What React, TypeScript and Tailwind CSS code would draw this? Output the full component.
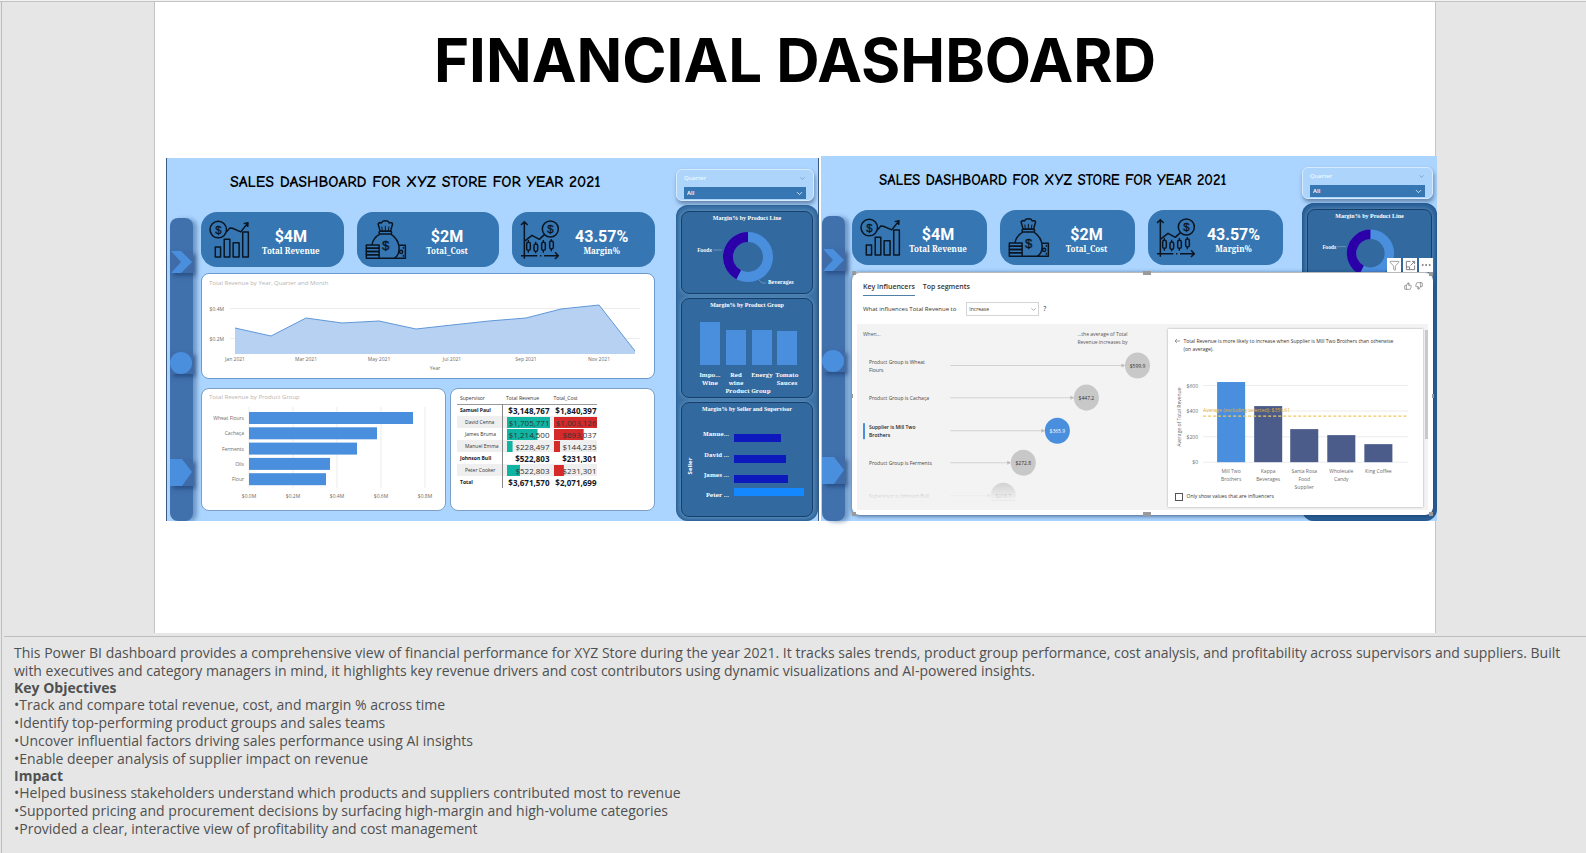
import React from "react";
import { ChevronDown, Filter, ThumbsUp, ThumbsDown, Ellipsis } from "lucide-react";

const SANS = "font-['Open_Sans','Noto_Sans',sans-serif]";
const SERIF = "font-['Noto_Serif','DejaVu_Serif','Liberation_Serif',serif]";
const NARROW_SERIF = "font-['Liberation_Serif',serif]";

type TProps = {
  x: number;
  y: number;
  children: React.ReactNode;
  anchor?: "start" | "middle" | "end";
  className?: string;
  transform?: string;
};

function T({ x, y, children, anchor = "start", className = "fill-[#6b6b6b]", transform }: TProps) {
  return (
    <text x={x} y={y} textAnchor={anchor} transform={transform} className={className}>
      {children}
    </text>
  );
}

function RevenueIcon() {
  return (
    <svg viewBox="0 0 122 118" className="h-[39px] w-[41px]" fill="none" stroke="#0a1522" strokeWidth="4.5" strokeLinejoin="round">
      <circle cx="27" cy="29" r="25" />
      <text x="27" y="41" textAnchor="middle" fontSize="34" fill="#0a1522" strokeWidth="1" className="font-['Liberation_Sans',sans-serif]">$</text>
      <path d="M52 36 L62 24 L70 25 L95 36 L116 10 M104 11 L117 8 L116 21" />
      <rect x="18" y="82" width="16" height="30" />
      <rect x="45" y="58" width="17" height="54" />
      <rect x="72" y="69" width="18" height="43" />
      <rect x="101" y="36" width="17" height="76" />
    </svg>
  );
}

function MoneyBagIcon() {
  return (
    <svg viewBox="0 0 126 122" className="h-[40px] w-[42px]" fill="none" stroke="#0a1522" strokeWidth="4.5" strokeLinejoin="round">
      <path d="M45 34 L39 12 Q42 6 49 9 Q53 1 61 3 Q70 1 73 9 Q81 6 83 12 L77 34 Z" />
      <path d="M52 33 L50 20 M61 33 V18 M70 33 L72 20" strokeWidth="3" />
      <rect x="42" y="34" width="38" height="9" rx="3" />
      <path d="M44 43 Q24 54 20 76 M78 43 Q101 58 103 84 Q104 108 88 117 H42" />
      <text x="62" y="92" textAnchor="middle" fontSize="40" fill="#0a1522" strokeWidth="1" className="font-['Liberation_Sans',sans-serif]">$</text>
      <rect x="3" y="76" width="39" height="10" />
      <rect x="3" y="86" width="39" height="10" />
      <rect x="3" y="96" width="39" height="10" />
      <rect x="3" y="106" width="39" height="11" />
      <path d="M103 77 H122 V117 H88" />
      <circle cx="109" cy="97" r="5" />
      <path d="M116 82 V88 M116 106 V112" strokeWidth="4" />
    </svg>
  );
}

function MarginIcon() {
  return (
    <svg viewBox="0 0 120 120" className="h-[40px] w-[40px]" fill="none" stroke="#0a1522" strokeWidth="4.5" strokeLinejoin="round">
      <path d="M13 116 V6 M3 15 L13 5 L23 15" />
      <path d="M3 107 H52 M60 107 H64 M72 107 H114 M105 97 L115 107 L105 117" />
      <path d="M13 64 L36 46 L58 58 L74 43" />
      <circle cx="91" cy="27" r="24" />
      <text x="91" y="39" textAnchor="middle" fontSize="34" fill="#0a1522" strokeWidth="1" className="font-['Liberation_Sans',sans-serif]">$</text>
      <rect x="20" y="67" width="11" height="24" rx="5" />
      <rect x="42" y="72" width="11" height="22" rx="5" />
      <rect x="65" y="67" width="11" height="24" rx="5" />
      <rect x="89" y="63" width="11" height="24" rx="5" />
      <path d="M25 60 V67 M25 91 V98 M47 65 V72 M47 94 V100 M70 60 V67 M70 91 V98 M94 57 V63 M94 87 V94" strokeWidth="4" />
    </svg>
  );
}

function FocusIcon() {
  return (
    <svg viewBox="0 0 12 12" className="h-[11px] w-[11px]" fill="none" stroke="currentColor" strokeWidth="1">
      <path d="M6 1.500 H1.500 V10.500 H10.500 V6" />
      <path d="M1.500 7.500 H5 V10.500 M6 6 L10.500 1.500 M7.500 1.500 H10.500 V4.500" />
    </svg>
  );
}

function Kpi({ icon, value, label }: { icon: React.ReactNode; value: string; label: string }) {
  return (
    <div className="flex h-[55px] min-w-0 flex-1 items-center rounded-2xl bg-[#3576b3] pr-3 pl-2">
      <div className="shrink-0">{icon}</div>
      <div className="min-w-0 flex-1 pt-[6px] text-center text-white">
        <div className="font-['Roboto',sans-serif] text-base leading-4 font-bold">{value}</div>
        <div className={`${SERIF} text-[8px] leading-3 font-bold whitespace-nowrap`}>{label}</div>
      </div>
    </div>
  );
}

function KpiRow() {
  return (
    <div className="flex gap-[13px]">
      <Kpi icon={<RevenueIcon />} value="$4M" label="Total Revenue" />
      <Kpi icon={<MoneyBagIcon />} value="$2M" label="Total_Cost" />
      <Kpi icon={<MarginIcon />} value="43.57%" label="Margin%" />
    </div>
  );
}

function Rail() {
  const tile = "block w-full bg-[#3f6ca8] shadow-[3px_3px_4px_rgba(20,50,100,0.5)]";
  return (
    <nav aria-label="Pages" className="mt-[60px] flex w-[23px] shrink-0 flex-col rounded-lg bg-[#4171ad] pt-[33px] pb-[35px] shadow-[4px_1px_4px_rgba(60,100,150,0.55)]">
      <button aria-label="Next" className={tile}>
        <svg viewBox="0 0 23 22" className="block w-full"><path d="M1 0 H11 L22 11 L11 22 H1 L11 11 Z" fill="#4a8ede" /></svg>
      </button>
      <button aria-label="Overview" className={`mt-[79px] ${tile}`}>
        <svg viewBox="0 0 23 22" className="block w-full"><circle cx="11" cy="11" r="11" fill="#4a8ede" /></svg>
      </button>
      <button aria-label="Details" className={`mt-[85px] ${tile}`}>
        <svg viewBox="0 0 23 27" className="block w-full"><path d="M0 0 H12 L22 13 L12 27 H0 Z" fill="#4a8ede" /></svg>
      </button>
    </nav>
  );
}

function Slicer({ id }: { id: string }) {
  return (
    <div className={`${SANS} mt-[11px] mr-1 h-8 rounded-md border border-[#d7ebff] bg-[#add5fc] px-[7px] shadow-[1px_3px_4px_rgba(60,90,130,0.65)]`}>
      <div className="flex h-[17px] items-center justify-between text-[6px] text-white">
        <label htmlFor={id}>Quarter</label>
        <ChevronDown size={7} className="text-[#5b86b0]" />
      </div>
      <div className="relative">
        <select id={id} className="block h-3 w-full appearance-none bg-[#3576b3] px-[3px] text-[6px] leading-3 font-semibold text-white">
          <option>All</option>
        </select>
        <ChevronDown size={9} className="pointer-events-none absolute top-[2px] right-[2px] text-white" />
      </div>
    </div>
  );
}

function SideCard({ title, viewBox, children }: { title: string; viewBox: string; children: React.ReactNode }) {
  return (
    <section className="rounded-lg border border-[#173f6b] bg-[#32699f] shadow-[0_0_4px_rgba(120,170,205,0.7)]">
      <h3 className={`${NARROW_SERIF} h-[13px] text-center text-[6px] leading-3 font-bold whitespace-nowrap text-white`}>{title}</h3>
      <svg viewBox={viewBox} className={`${SERIF} block w-full text-[5px] font-bold`}>{children}</svg>
    </section>
  );
}

function DonutCard() {
  return (
    <SideCard title="Margin% by Product Line" viewBox="0 0 130 68">
      <circle cx="66" cy="32" r="20" fill="none" stroke="#4a8ede" strokeWidth="10" />
      <path d="M66 12 A20 20 0 0 0 56.7 49.7" fill="none" stroke="#2b00a8" strokeWidth="10" />
      <path d="M31 25 H40 M77 55 L80 58 H84" fill="none" stroke="#8fb2d3" strokeWidth="0.6" />
      <T x={30} y={27} anchor="end" className="fill-white">Foods</T>
      <T x={86} y={59} className="fill-white">Beverages</T>
    </SideCard>
  );
}

const GROUPS = [
  { x: 18, top: 10, a: "Impo...", b: "Wine" },
  { x: 44, top: 18, a: "Red", b: "wine" },
  { x: 70, top: 18, a: "Energy", b: "" },
  { x: 95, top: 19, a: "Tomato", b: "Sauces" },
];

function GroupCard() {
  return (
    <SideCard title="Margin% by Product Group" viewBox="0 0 130 85">
      <g className="text-[6px]">
        {GROUPS.map((g) => (
          <g key={g.a}>
            <rect x={g.x} y={g.top} width="20" height={53 - g.top} fill="#4a8ede" />
            <T x={g.x + 10} y={65} anchor="middle" className="fill-white">{g.a}</T>
            <T x={g.x + 10} y={73} anchor="middle" className="fill-white">{g.b}</T>
          </g>
        ))}
        <T x={66} y={81} anchor="middle" className="fill-white">Product Group</T>
      </g>
    </SideCard>
  );
}

const SELLERS = [
  { n: "Manue...", bar: 18, w: 47, y: 20, c: "#0d18bd" },
  { n: "David ...", bar: 39, w: 52, y: 41, c: "#0d18bd" },
  { n: "James ...", bar: 59, w: 54, y: 61, c: "#0d18bd" },
  { n: "Peter ...", bar: 72, w: 70, y: 81, c: "#1489ff" },
];

function SellerCard() {
  return (
    <SideCard title="Margin% by Seller and Supervisor" viewBox="0 0 130 100">
      <g className="text-[6px]">
        {SELLERS.map((s) => (
          <g key={s.n}>
            <T x={47} y={s.y} anchor="end" className="fill-white">{s.n}</T>
            <rect x="52" y={s.bar} width={s.w} height="8" fill={s.c} />
          </g>
        ))}
      </g>
      <T x={0} y={0} anchor="middle" transform="translate(10 50) rotate(-90)" className="fill-white font-['Open_Sans',sans-serif] text-[6px]">Seller</T>
    </SideCard>
  );
}

function AreaCard() {
  const line = "33,54 69,62 104,44 140,49 177,47 214,55 250,51 287,47 324,44 359,35 397,31 433,77";
  const months: [number, string][] = [[33, "Jan 2021"], [104, "Mar 2021"], [177, "May 2021"], [250, "Jul 2021"], [324, "Sep 2021"], [397, "Nov 2021"]];
  return (
    <section className="rounded-lg border border-[#6a9bd0] bg-white">
      <svg viewBox="0 0 452 104" className={`${SANS} block w-full text-[5px]`}>
        <T x={7} y={11} className="fill-[#b5b5b5] text-[6px]">Total Revenue by Year, Quarter and Month</T>
        <path d="M28 34.500 H438 M28 64.500 H438" stroke="#ececec" />
        <polygon points={`33,80 ${line} 433,80`} fill="#b7d1f2" />
        <polyline points={line} fill="none" stroke="#5f98d8" strokeWidth="1" />
        <T x={22} y={37} anchor="end">$0.4M</T>
        <T x={22} y={67} anchor="end">$0.2M</T>
        {months.map(([x, m]) => <T key={m} x={x} y={87} anchor="middle">{m}</T>)}
        <T x={233} y={96} anchor="middle">Year</T>
      </svg>
    </section>
  );
}

const PRODUCTS: [string, number][] = [["Wheat Flours", 164], ["Cachaça", 128], ["Ferments", 108], ["Oils", 81], ["Flour", 77]];

function BarCard() {
  return (
    <section className="min-w-0 flex-[243] rounded-lg border border-[#7b9fc6] bg-white">
      <svg viewBox="0 0 243 121" className={`${SANS} block w-full text-[5px]`}>
        <T x={7} y={10} className="fill-[#b5b5b5] text-[6px]">Total Revenue by Product Group</T>
        {[0, 1, 2, 3, 4].map((i) => (
          <g key={i}>
            <path d={`M${47 + i * 44} 18 V99`} stroke="#ececec" />
            <T x={47 + i * 44} y={109} anchor="middle">{`$0.${i * 2}M`}</T>
          </g>
        ))}
        {PRODUCTS.map(([n, w], i) => (
          <g key={n}>
            <rect x="47" y={23 + i * 15.300} width={w} height="12" fill="#4a8ede" />
            <T x={42} y={31 + i * 15.300} anchor="end">{n}</T>
          </g>
        ))}
      </svg>
    </section>
  );
}

type Row = { n: string; r: string; c: string; rw?: number; cw?: number };
const ROWS: Row[] = [
  { n: "Samuel Paul", r: "$3,148,767", c: "$1,840,397" },
  { n: "David Cenna", r: "$1,705,771", c: "$1,003,126", rw: 100, cw: 100 },
  { n: "James Bruma", r: "$1,214,500", c: "$693,037", rw: 71, cw: 69 },
  { n: "Manuel Emma", r: "$228,497", c: "$144,235", rw: 13, cw: 14 },
  { n: "Johnson Bull", r: "$522,803", c: "$231,301" },
  { n: "Peter Cooker", r: "$522,803", c: "$231,301", rw: 31, cw: 23 },
  { n: "Total", r: "$3,671,570", c: "$2,071,699" },
];

function Cell({ v, w, color }: { v: string; w?: number; color: string }) {
  return (
    <td className="p-0 pl-1">
      <div
        className="h-[11px] w-[43px] bg-no-repeat text-right text-[8px] leading-[11px]"
        style={w ? { backgroundImage: `linear-gradient(${color},${color})`, backgroundSize: `${w}% 100%` } : undefined}
      >
        {v}
      </div>
    </td>
  );
}

function TableCard() {
  return (
    <section className="min-w-0 flex-[197] rounded-lg border border-[#7b9fc6] bg-white pt-[3px] pl-[6px]">
      <table className={`${SANS} border-collapse text-[#333] [&_td]:whitespace-nowrap`}>
        <thead>
          <tr className="h-3 border-b border-[#999] text-left text-[5px] leading-[10px]">
            <th className="w-[45px] p-0 pl-[3px] font-normal">Supervisor</th>
            <th className="p-0 pl-1 font-normal">Total Revenue</th>
            <th className="p-0 pl-1 font-normal">Total_Cost</th>
          </tr>
        </thead>
        <tbody>
          {ROWS.map((r, i) => (
            <tr key={r.n} className={`h-3 ${r.rw ? "" : "font-bold text-[#111827]"} ${i === 1 || i === 3 || i === 5 ? "bg-[#efefef]" : ""}`}>
              <td className={`w-[45px] border-r border-[#888] p-0 text-[5px] leading-[11px] ${r.rw ? "pl-2" : "pl-[3px]"}`}>{r.n}</td>
              <Cell v={r.r} w={r.rw} color="#0fb5a2" />
              <Cell v={r.c} w={r.cw} color="#d42a2a" />
            </tr>
          ))}
        </tbody>
      </table>
    </section>
  );
}

function BoardTitle({ small }: { small?: boolean }) {
  return (
    <h2 className={`pt-[14px] pb-5 font-['Comic_Sans_MS','Comic_Neue','Lato',sans-serif] leading-5 font-bold whitespace-nowrap text-black ${small ? "pl-[27px] text-[15px]" : "pl-[29px] text-base"}`}>
      SALES DASHBOARD FOR XYZ STORE FOR YEAR 2021
    </h2>
  );
}

function SalesBoard() {
  return (
    <article className="mt-[2px] flex min-w-0 flex-[648] overflow-hidden border-x border-[#3a5a80] bg-[#abd5ff] pl-[3px]">
      <Rail />
      <div className="ml-2 min-w-0 flex-[454]">
        <BoardTitle />
        <KpiRow />
        <div className="mt-[6px]"><AreaCard /></div>
        <div className="mt-[9px] flex gap-1">
          <BarCard />
          <TableCard />
        </div>
      </div>
      <aside className="ml-[21px] flex min-w-0 flex-[142] flex-col">
        <Slicer id="quarter-sales" />
        <div className="mt-1 flex flex-1 flex-col gap-1 rounded-xl bg-[#3a71a6] px-[5px] pt-[6px] pb-1 shadow-[inset_0_0_3px_#1c4d80]">
          <DonutCard />
          <GroupCard />
          <SellerCard />
        </div>
      </aside>
    </article>
  );
}

const INFLUENCERS = [
  { a: "Product Group is Wheat", b: "Flours", y: 42, x: 280, v: "$599.9" },
  { a: "Product Group is Cachaça", b: "", y: 74, x: 229, v: "$447.2" },
  { a: "Supplier is Mill Two", b: "Brothers", y: 107, x: 200, v: "$365.9", on: true },
  { a: "Product Group is Ferments", b: "", y: 139, x: 166, v: "$272.8" },
  { a: "Supervisor is Johnson Bull", b: "", y: 172, x: 146, v: "$218.7" },
];

function InfluencerList() {
  return (
    <svg viewBox="0 0 310 186" className="block min-w-0 flex-[310] self-start text-[5px]">
      <defs>
        <linearGradient id="fade" x1="0" y1="0" x2="0" y2="1">
          <stop offset="0" stopColor="#f3f3f3" stopOpacity="0.1" />
          <stop offset="1" stopColor="#f3f3f3" />
        </linearGradient>
      </defs>
      <T x={6} y={12} className="fill-[#555]">When...</T>
      <T x={220} y={12} className="fill-[#555]">...the average of Total</T>
      <T x={220} y={20} className="fill-[#555]">Revenue increases by</T>
      {INFLUENCERS.map((f) => (
        <g key={f.a}>
          <T x={12} y={f.b ? f.y - 2 : f.y + 2} className={f.on ? "fill-[#222] font-semibold" : "fill-[#444]"}>{f.a}</T>
          <T x={12} y={f.y + 6} className={f.on ? "fill-[#222] font-semibold" : "fill-[#444]"}>{f.b}</T>
          <path d={`M93 ${f.y - 0.5} H${f.x - 14}`} stroke="#d2d2d2" />
          <path d={`M${f.x - 16} ${f.y - 2.5} L${f.x - 12} ${f.y - 0.5} L${f.x - 16} ${f.y + 1.5} Z`} fill="#bdbdbd" />
          <ellipse cx={f.x} cy={f.y - 0.5} rx="12.500" ry="13" fill={f.on ? "#4a8ede" : "#c8c8c8"} />
          <T x={f.x} y={f.y + 2} anchor="middle" className={f.on ? "fill-white" : "fill-[#333]"}>{f.v}</T>
        </g>
      ))}
      <rect x="6" y="99" width="2" height="16" fill="#4a8ede" />
      <rect x="0" y="156" width="310" height="20" fill="url(#fade)" />
      <rect x="0" y="176" width="310" height="10" fill="#f3f3f3" />
    </svg>
  );
}

const SUPPLIERS = [
  { x: 49, top: 21, l: ["Mill Two", "Brothers"], c: "#4a8ede" },
  { x: 86, top: 45, l: ["Kappa", "Beverages"], c: "#4c5c8a" },
  { x: 122, top: 68, l: ["Santa Rosa", "Food", "Supplier"], c: "#4c5c8a" },
  { x: 159, top: 74, l: ["Wholesale", "Candy"], c: "#4c5c8a" },
  { x: 196, top: 83, l: ["King Coffee"], c: "#4c5c8a" },
];

function SupplierChart() {
  return (
    <svg viewBox="0 0 255 130" className="block w-full text-[5px]">
      {[600, 400, 200, 0].map((v, i) => (
        <g key={v}>
          <path d={`M35 ${24.500 + i * 25.500} H240`} stroke="#ececec" />
          <T x={30} y={26.500 + i * 25.500} anchor="end">{`$${v}`}</T>
        </g>
      ))}
      {SUPPLIERS.map((s) => (
        <g key={s.x}>
          <rect x={s.x} y={s.top} width="28" height={101 - s.top} fill={s.c} />
          {s.l.map((t, i) => <T key={t} x={s.x + 14} y={112 + i * 8} anchor="middle">{t}</T>)}
        </g>
      ))}
      <path d="M35 55 H240" stroke="#eec75d" strokeWidth="1.200" strokeDasharray="3 2" />
      <T x={35} y={51} className="fill-[#e3b23c]">Average (excluding selected): $359.61</T>
      <T x={0} y={0} anchor="middle" transform="translate(13 56) rotate(-90)">Average of Total Revenue</T>
    </svg>
  );
}

function InfluencerPanel() {
  const handle = "absolute h-1 bg-[#9a9a9a]";
  const tool = "flex h-[14px] w-[14px] items-center justify-center bg-white";
  return (
    <section className={`${SANS} absolute top-[116px] right-1 bottom-[6px] left-[31px] rounded-lg border-t border-[#b9b9b9] bg-white shadow-[0_1px_4px_rgba(20,50,90,0.75)]`}>
      <div className="absolute -top-[15px] right-0 flex gap-[2px] text-[#777]">
        <button aria-label="Filter" className={tool}><Filter size={11} strokeWidth={1.5} /></button>
        <button aria-label="Focus mode" className={tool}><FocusIcon /></button>
        <button aria-label="More options" className={tool}><Ellipsis size={12} /></button>
      </div>
      <span className={`${handle} -top-[2px] left-0 w-1`} />
      <span className={`${handle} -top-[2px] left-1/2 w-2`} />
      <span className={`${handle} -top-[1px] right-0 w-1`} />
      <span className={`${handle} -bottom-px left-0 w-1`} />
      <span className={`${handle} -bottom-px left-1/2 w-2`} />
      <span className={`${handle} right-0 -bottom-px w-1`} />
      <span className={`${handle} top-1/2 -left-px w-[2px]`} />
      <span className={`${handle} top-1/2 -right-px w-[2px]`} />
      <div className="flex items-start pt-2 pr-[10px] pl-[11px] text-[7px] leading-3 font-semibold text-[#333]">
        <button className="h-[15px] border-b border-[#4f81a8] pb-[2px]">Key influencers</button>
        <button className="ml-2 h-[15px] pb-[3px]">Top segments</button>
        <div className="ml-auto flex gap-[3px] pt-px text-[#666]">
          <button aria-label="Helpful"><ThumbsUp size={8} strokeWidth={1.8} /></button>
          <button aria-label="Not helpful"><ThumbsDown size={8} strokeWidth={1.8} /></button>
        </div>
      </div>
      <div className="mt-[6px] flex h-[14px] items-center pl-[11px] text-[6px] font-medium text-[#333]">
        <label htmlFor="direction">What influences Total Revenue to</label>
        <div className="relative ml-[10px]">
          <select id="direction" className="block h-[14px] w-[73px] appearance-none border border-[#d4d4d4] bg-white px-[2px] text-[5px] leading-3">
            <option>Increase</option>
          </select>
          <ChevronDown size={7} className="pointer-events-none absolute top-1 right-[2px] text-[#777]" />
        </div>
        <span className="ml-1 text-[7px]">?</span>
      </div>
      <div className="mx-[5px] mt-2 flex bg-[#f3f3f3]">
        <InfluencerList />
        <div className="mt-[5px] mb-[3px] min-w-0 flex-[255] bg-white shadow-[0_0_2px_rgba(0,0,0,0.35)]">
          <div className="flex h-8 gap-1 pt-2 pr-6 pl-[6px] text-[5px] leading-2 text-[#333]">
            <svg viewBox="0 0 6 6" className="mt-px h-[6px] w-[6px] shrink-0"><path d="M6 3 H1 M3 1 L1 3 L3 5" fill="none" stroke="#777" strokeWidth="0.7" /></svg>
            <p>Total Revenue is more likely to increase when Supplier is Mill Two Brothers than otherwise (on average).</p>
          </div>
          <SupplierChart />
          <label className="flex h-3 items-center gap-1 pl-[7px] text-[5px] font-medium text-[#333]">
            <input type="checkbox" className="h-2 w-2 appearance-none border border-[#555] bg-white" />
            Only show values that are influencers
          </label>
        </div>
        <div className="mt-[6px] ml-[2px] h-[109px] w-[3px] bg-[#c9c9c9]" />
      </div>
    </section>
  );
}

function InfluencerBoard() {
  return (
    <article className="relative ml-[2px] flex min-w-0 flex-[615] bg-[#abd5ff] pl-px">
      <Rail />
      <div className="ml-[7px] min-w-0 flex-[431]">
        <BoardTitle small />
        <KpiRow />
      </div>
      <aside className="ml-[19px] flex min-w-0 flex-[135] flex-col">
        <Slicer id="quarter-influencers" />
        <div className="mt-1 flex-1 rounded-xl bg-[#2d639b] px-[5px] pt-[6px] shadow-[inset_0_0_3px_#1c4d80]">
          <DonutCard />
        </div>
      </aside>
      <InfluencerPanel />
    </article>
  );
}

const OBJECTIVES = [
  "Track and compare total revenue, cost, and margin % across time",
  "Identify top-performing product groups and sales teams",
  "Uncover influential factors driving sales performance using AI insights",
  "Enable deeper analysis of supplier impact on revenue",
];
const IMPACT = [
  "Helped business stakeholders understand which products and suppliers contributed most to revenue",
  "Supported pricing and procurement decisions by surfacing high-margin and high-volume categories",
  "Provided a clear, interactive view of profitability and cost management",
];

function Bullets({ items }: { items: string[] }) {
  return <ul>{items.map((t) => <li key={t}>•{t}</li>)}</ul>;
}

export default function App() {
  return (
    <div className="min-h-screen border-t border-[#f2f2f2] bg-[#e6e6e6]">
      <div className="min-h-[852px] border-t border-[#c3c3c3]">
        <div className="ml-px min-h-[851px] border-l border-[#bdbdbd]">
          <main className="mr-[150px] ml-[152px] border-x border-[#c4c4c4] bg-white pb-[112px]">
            <h1 className="pt-6 pb-[62px] text-center font-['Inter',Arial,sans-serif] text-[60px] leading-[68px] font-bold whitespace-nowrap text-black">
              FINANCIAL DASHBOARD
            </h1>
            <div className="-mr-[2px] ml-[11px] flex">
              <SalesBoard />
              <InfluencerBoard />
            </div>
          </main>
          <section aria-label="Notes" className="mt-[3px] ml-[2px] border-t border-[#bdbdbd] pt-[7px] pr-1 pl-[10px] font-['Open_Sans','Noto_Sans',sans-serif] text-[14px] leading-[18px] text-[#505050]">
            <p>
              This Power BI dashboard provides a comprehensive view of financial performance for XYZ Store during the year 2021. It tracks sales trends, product group performance, cost analysis, and profitability across supervisors and suppliers. Built with executives and category managers in mind, it highlights key revenue drivers and cost contributors using dynamic visualizations and AI-powered insights.
            </p>
            <h2 className="leading-4 font-bold">Key Objectives</h2>
            <Bullets items={OBJECTIVES} />
            <h2 className="leading-4 font-bold">Impact</h2>
            <Bullets items={IMPACT} />
          </section>
        </div>
      </div>
    </div>
  );
}
